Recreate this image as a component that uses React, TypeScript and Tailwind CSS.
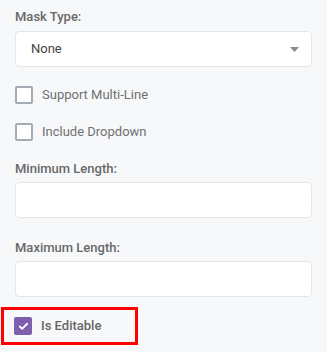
import { Check } from "lucide-react";

function CheckRow({ label, checked }: { label: string; checked?: boolean }) {
  return (
    <div className="flex items-center">
      {checked ? (
        <span className="flex h-[18px] w-[18px] items-center justify-center rounded-[2px] bg-[#7e5fad]">
          <Check className="h-[11px] w-[11px] text-white" strokeWidth={4} />
        </span>
      ) : (
        <span className="h-[18px] w-[18px] rounded-[2px] border-2 border-[#a5abb2] bg-white" />
      )}
      <span
        className={
          "ml-[9px] text-[13px] leading-[18px] " +
          (checked ? "font-medium text-[#666]" : "text-[#707070]")
        }
      >
        {label}
      </span>
    </div>
  );
}

function Label({ children }: { children: React.ReactNode }) {
  return (
    <div className="text-[13px] font-medium leading-[16px] text-[#686868]">{children}</div>
  );
}

function TextBox() {
  return <div className="h-[36px] w-full rounded-[4px] border border-[#e4e5e7] bg-white" />;
}

export default function App() {
  return (
    <div
      className="h-[352px] w-[327px] overflow-hidden bg-[#f7f8fa] px-[15px] pt-[9px]"
      style={{ fontFamily: "Roboto, 'Liberation Sans', sans-serif" }}
    >
      <Label>Mask Type:</Label>
      <div className="mt-[6px] flex h-[36px] items-center justify-between rounded-[4px] border border-[#e4e5e7] bg-white pl-[15px] pr-[12px]">
        <span className="text-[13px] text-[#444]">None</span>
        <svg width="9" height="5" viewBox="0 0 9 5">
          <path d="M0 0h9L4.5 5z" fill="#8a8a8a" />
        </svg>
      </div>

      <div className="mt-[19px]">
        <CheckRow label="Support Multi-Line" />
      </div>
      <div className="mt-[19px]">
        <CheckRow label="Include Dropdown" />
      </div>

      <div className="mt-[20px]">
        <Label>Minimum Length:</Label>
      </div>
      <div className="mt-[5px]">
        <TextBox />
      </div>

      <div className="mt-[22px]">
        <Label>Maximum Length:</Label>
      </div>
      <div className="mt-[5px]">
        <TextBox />
      </div>

      <div className="ml-[-14px] mt-[10px] flex h-[38px] w-[137px] items-center border-[3px] border-[#ff0000] pl-[10px]">
        <CheckRow label="Is Editable" checked />
      </div>
    </div>
  );
}
